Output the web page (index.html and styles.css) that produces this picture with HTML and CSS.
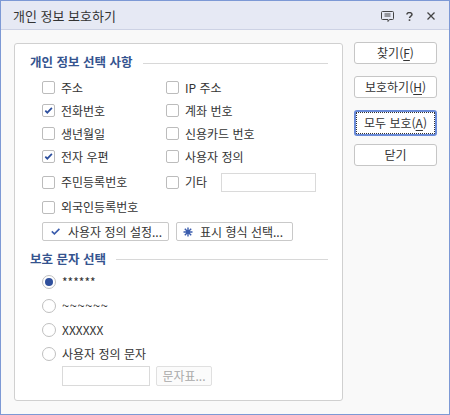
FILE: index.html
```html
<!DOCTYPE html>
<html lang="ko">
<head>
<meta charset="utf-8">
<title>개인 정보 보호하기</title>
<link rel="stylesheet" href="styles.css">
</head>
<body>
<div class="window">
  <div class="titlebar">
    <span class="title">개인 정보 보호하기</span>
    <div class="tb-icons">
      <svg class="ic-memo" width="13" height="11" viewBox="0 0 13 11"><path d="M1.5 0.5h10a1 1 0 0 1 1 1v6a1 1 0 0 1-1 1h-3l-1.5 2v-2h-5.5a1 1 0 0 1-1-1v-6a1 1 0 0 1 1-1z" fill="none" stroke="#444" stroke-width="1"/><path d="M3.5 3h6M3.5 5h6" stroke="#444" stroke-width="1"/></svg>
      <svg class="ic-help" width="7" height="9" viewBox="0 0 7 9"><path d="M0.9 2.6C0.9 1.3 2 0.6 3.4 0.6S6 1.4 6 2.6c0 1.1-0.8 1.5-1.6 2-0.6 0.4-0.9 0.7-0.9 1.5" fill="none" stroke="#444" stroke-width="1.5"/><rect x="2.7" y="7.3" width="1.6" height="1.6" fill="#444"/></svg>
      <svg class="ic-close" width="8" height="8" viewBox="0 0 8 8"><path d="M0.5 0.5l7 7M7.5 0.5l-7 7" stroke="#444" stroke-width="1.3"/></svg>
    </div>
  </div>

  <div class="content">
    <div class="group">
      <div class="section-head"><span class="section-title">개인 정보 선택 사항</span><span class="rule"></span></div>

      <div class="checks">
        <div class="chk"><span class="box"></span><span class="lbl">주소</span></div>
        <div class="chk"><span class="box"></span><span class="lbl">IP 주소</span></div>

        <div class="chk"><span class="box"><svg width="11" height="11" viewBox="0 0 11 11"><path d="M2.3 5.6l2 2.1 4.6-4.8" fill="none" stroke="#2d4f9e" stroke-width="1.7"/></svg></span><span class="lbl">전화번호</span></div>
        <div class="chk"><span class="box"></span><span class="lbl">계좌 번호</span></div>

        <div class="chk"><span class="box"></span><span class="lbl">생년월일</span></div>
        <div class="chk"><span class="box"></span><span class="lbl">신용카드 번호</span></div>

        <div class="chk"><span class="box"><svg width="11" height="11" viewBox="0 0 11 11"><path d="M2.3 5.6l2 2.1 4.6-4.8" fill="none" stroke="#2d4f9e" stroke-width="1.7"/></svg></span><span class="lbl">전자 우편</span></div>
        <div class="chk"><span class="box"></span><span class="lbl">사용자 정의</span></div>

        <div class="chk"><span class="box"></span><span class="lbl">주민등록번호</span></div>
        <div class="chk"><span class="box"></span><span class="lbl lbl-fixed">기타</span><span class="field field-etc"></span></div>

        <div class="chk"><span class="box"></span><span class="lbl">외국인등록번호</span></div>
        <div class="chk"></div>
      </div>

      <div class="actions">
        <button class="btn-sm btn-custom" type="button"><svg width="9" height="7" viewBox="0 0 9 7"><path d="M0.8 3.4l2.6 2.5L8.4 0.9" fill="none" stroke="#3a5cad" stroke-width="1.6"/></svg><span>사용자 정의 설정...</span></button>
        <button class="btn-sm btn-format" type="button"><svg width="10" height="10" viewBox="0 0 10 10"><path d="M5 0.5v9M0.5 5h9M1.8 1.8l6.4 6.4M8.2 1.8l-6.4 6.4" stroke="#3a5cad" stroke-width="1.4"/><circle cx="5" cy="5" r="1.6" fill="#3a5cad"/></svg><span>표시 형식 선택...</span></button>
      </div>

      <div class="section-head section-head-2"><span class="section-title">보호 문자 선택</span><span class="rule"></span></div>

      <div class="radios">
        <div class="rad"><span class="circle on"></span><span class="lbl">******</span></div>
        <div class="rad"><span class="circle"></span><span class="lbl lbl-tilde">~~~~~~</span></div>
        <div class="rad"><span class="circle"></span><span class="lbl">XXXXXX</span></div>
        <div class="rad"><span class="circle"></span><span class="lbl">사용자 정의 문자</span></div>
      </div>

      <div class="custom-row">
        <span class="field field-char"></span>
        <button class="btn-sm btn-disabled" type="button">문자표...</button>
      </div>
    </div>

    <div class="side">
      <button class="btn" type="button">찾기(<u>F</u>)</button>
      <button class="btn" type="button">보호하기(<u>H</u>)</button>
      <button class="btn btn-focus" type="button">모두 보호(<u>A</u>)</button>
      <button class="btn" type="button">닫기</button>
    </div>
  </div>
</div>
</body>
</html>
```

FILE: styles.css
```css
* {
  box-sizing: border-box;
}

html, body {
  margin: 0;
  padding: 0;
  background: #f9f9f9;
}

body {
  font-family: "Noto Sans CJK KR", "Noto Sans", sans-serif;
  font-size: 12px;
  color: #333;
}

.window {
  width: 450px;
  height: 415px;
  border: 1px solid #7d99d5;
  background: #f9f9f9;
  display: flex;
  flex-direction: column;
}

.titlebar {
  height: 29px;
  flex: none;
  background: #e6e9f4;
  border-bottom: 1px solid #cdd2e4;
  display: flex;
  align-items: center;
  justify-content: space-between;
  padding: 0 14px 0 12px;
}

.title {
  font-size: 13px;
  line-height: 16px;
  color: #333;
  margin-top: 1px;
}

.tb-icons {
  display: flex;
  align-items: center;
  margin-top: 2px;
}

.ic-memo {
  display: block;
}

.ic-help {
  display: block;
  margin-left: 12px;
}

.ic-close {
  display: block;
  margin-left: 14px;
}

.content {
  flex: 1;
  display: flex;
  align-items: flex-start;
  gap: 11px;
  padding: 13px 12px 0 13px;
}

.group {
  width: 329px;
  flex: none;
  background: #fff;
  border: 1px solid #d0d0d0;
  border-radius: 3px;
  padding: 8px 14px 14px 15px;
}

.section-head {
  height: 20px;
  display: flex;
  align-items: center;
}

.section-title {
  font-size: 12.5px;
  font-weight: 700;
  line-height: 16px;
  color: #35548f;
}

.rule {
  flex: 1;
  height: 1px;
  background: #d8d8d8;
  margin-left: 10px;
  margin-top: 3px;
}

.section-head-2 {
  margin-top: 8px;
  height: 20px;
}

.section-head-2 .rule {
  margin-top: 1px;
}

.checks {
  margin-top: 4px;
  padding-left: 12px;
  display: grid;
  grid-template-columns: 124px 1fr;
  grid-template-rows: 23px 23px 23px 23px 28px 22px;
}

.chk,
.rad {
  display: flex;
  align-items: center;
}

.box {
  width: 13px;
  height: 13px;
  flex: none;
  border: 1px solid #bcbcbc;
  border-radius: 2px;
  background: #fff;
  display: flex;
  align-items: center;
  justify-content: center;
}

.box svg {
  display: block;
}

.lbl {
  margin-left: 6px;
  line-height: 16px;
  white-space: nowrap;
}

.lbl-fixed {
  width: 36px;
}

.lbl-tilde {
  font-size: 13px;
  letter-spacing: 0.5px;
}

.field {
  display: block;
  background: #fff;
  border: 1px solid #dadada;
}

.field-etc {
  width: 95px;
  height: 19px;
}

.actions {
  margin-top: 4px;
  padding-left: 12px;
  display: flex;
  gap: 7px;
}

button {
  font-family: inherit;
  font-size: 12px;
  color: #333;
  margin: 0;
  cursor: default;
}

.btn-sm {
  height: 19px;
  background: #fff;
  border: 1px solid #c9c9c9;
  border-radius: 2px;
  display: flex;
  align-items: center;
  padding: 0;
  line-height: 16px;
}

.btn-sm svg {
  display: block;
  flex: none;
}

.btn-custom {
  width: 127px;
  padding-left: 8px;
  gap: 8px;
}

.btn-format {
  width: 117px;
  padding-left: 6px;
  gap: 7px;
}

.radios {
  margin-top: 1px;
  padding-left: 12px;
  display: grid;
  grid-template-rows: repeat(4, 24px);
}

.circle {
  width: 14px;
  height: 14px;
  flex: none;
  border: 1px solid #bfbfbf;
  border-radius: 50%;
  background: #fff;
  display: flex;
  align-items: center;
  justify-content: center;
}

.circle.on::after {
  content: "";
  width: 8px;
  height: 8px;
  border-radius: 50%;
  background: #2f4f9c;
}

.rad .lbl {
  margin-left: 6px;
}

.custom-row {
  padding-left: 32px;
  display: flex;
  gap: 6px;
  height: 20px;
}

.field-char {
  width: 88px;
  height: 20px;
}

.btn-disabled {
  width: 56px;
  height: 20px;
  justify-content: center;
  color: #a9a9a9;
  border-color: #e0e0e0;
  background: #fbfbfb;
}

.side {
  width: 83px;
  flex: none;
  display: flex;
  flex-direction: column;
  gap: 12px;
  margin-top: -1px;
}

.btn {
  height: 22px;
  width: 83px;
  background: #fff;
  border: 1px solid #c6c6c6;
  border-radius: 3px;
  padding: 0;
  line-height: 16px;
  text-align: center;
}

.btn u {
  text-underline-offset: 2px;
}

.btn-focus {
  height: 26px;
  border: 2px solid #6a8bd8;
  outline: 1px dotted #333;
  outline-offset: -3px;
  margin-bottom: -4px;
}
```
